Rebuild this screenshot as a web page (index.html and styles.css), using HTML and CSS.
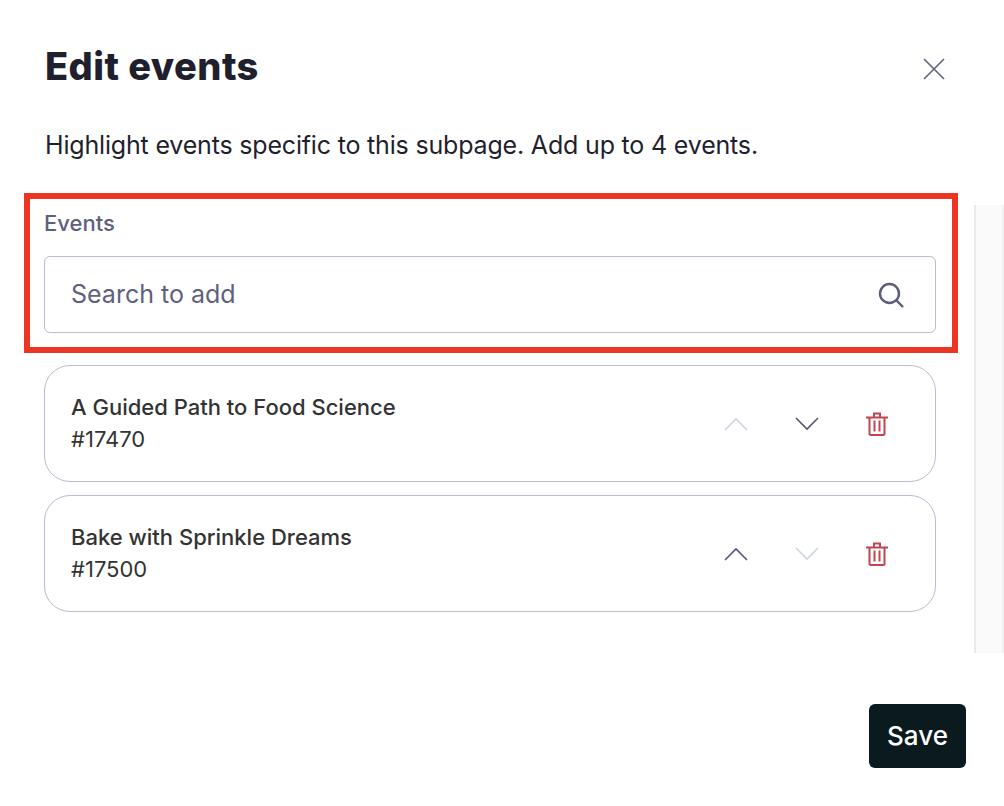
FILE: index.html
```html
<!DOCTYPE html>
<html lang="en">
<head>
<meta charset="utf-8">
<title>Edit events</title>
<link rel="stylesheet" href="styles.css">
</head>
<body>
<main class="dialog">
  <header class="head">
    <h1 class="title">Edit events</h1>
    <button class="close" aria-label="Close">
      <svg width="24" height="24" viewBox="0 0 24 24" class="ico"><path d="M2 2 22 22M22 2 2 22" stroke="#5f6080" stroke-width="1.6" fill="none"/></svg>
    </button>
  </header>
  <p class="desc">Highlight events specific to this subpage. Add up to 4 events.</p>
  <div class="body">
    <div class="content">
      <section class="field">
        <div class="label">Events</div>
        <div class="search">
          <span class="placeholder">Search to add</span>
          <svg width="28" height="28" viewBox="0 0 28 28" class="ico"><circle cx="11.5" cy="12.5" r="9.500" stroke="#5b5c7e" stroke-width="2.4" fill="none"/><path d="M18.500 19.500 25 26" stroke="#5b5c7e" stroke-width="2.4" fill="none"/></svg>
        </div>
      </section>
      <ul class="cards">
        <li class="card">
          <div class="info"><div class="name">A Guided Path to Food Science</div><div class="num">#17470</div></div>
          <div class="actions">
            <svg width="24" height="14" viewBox="0 0 24 14" class="ico"><path d="M1 13 12 2 23 13" stroke="#ced3e8" stroke-width="1.6" fill="none"/></svg>
            <svg width="24" height="14" viewBox="0 0 24 14" class="ico"><path d="M1 1 12 12 23 1" stroke="#55567a" stroke-width="1.6" fill="none"/></svg>
            <svg width="24" height="24" viewBox="0 0 24 24" class="ico trash"><path d="M1 5.500H23M9 5V1.500H15V5M4.500 6V21.500Q4.500 23 6 23H18Q19.500 23 19.500 21.500V6M9.500 8.500V19.500M14.500 8.500V19.500" stroke="#c1444f" stroke-width="2" fill="none"/></svg>
          </div>
        </li>
        <li class="card">
          <div class="info"><div class="name">Bake with Sprinkle Dreams</div><div class="num">#17500</div></div>
          <div class="actions">
            <svg width="24" height="14" viewBox="0 0 24 14" class="ico"><path d="M1 13 12 2 23 13" stroke="#55567a" stroke-width="1.6" fill="none"/></svg>
            <svg width="24" height="14" viewBox="0 0 24 14" class="ico"><path d="M1 1 12 12 23 1" stroke="#ced3e8" stroke-width="1.6" fill="none"/></svg>
            <svg width="24" height="24" viewBox="0 0 24 24" class="ico trash"><path d="M1 5.500H23M9 5V1.500H15V5M4.500 6V21.500Q4.500 23 6 23H18Q19.500 23 19.500 21.500V6M9.500 8.500V19.500M14.500 8.500V19.500" stroke="#c1444f" stroke-width="2" fill="none"/></svg>
          </div>
        </li>
      </ul>
    </div>
    <div class="scrollbar"></div>
  </div>
  <footer class="foot"><button class="save">Save</button></footer>
</main>
</body>
</html>
```
FILE: styles.css
```css
* { box-sizing: border-box; }
html, body { margin: 0; padding: 0; }
body { width: 1004px; height: 806px; overflow: hidden; background: #fff; font-family: Inter, "Liberation Sans", sans-serif; color: #1f1f2e; }
.dialog { display: flex; flex-direction: column; height: 806px; }
.head { display: flex; justify-content: space-between; align-items: center; height: 44px; margin-top: 44px; padding: 0 58px 0 45px; }
.title { margin: 0; font-size: 38px; line-height: 44px; font-weight: 800; letter-spacing: 0.45px; color: #1f1f2e; }
.close { display: flex; padding: 0; border: 0; background: none; margin-top: 6px; }
.ico { display: block; flex: none; }
.desc { margin: 39px 0 0; padding: 0 0 0 45px; height: 36px; font-size: 25px; line-height: 36px; letter-spacing: -0.18px; color: #1f1f2e; }
.body { display: flex; margin-top: 30px; padding-left: 24px; gap: 16px; align-items: flex-start; }
.content { width: 934px; display: flex; flex-direction: column; gap: 12px; }
.field { border: 6px solid #ee3524; padding: 8px 16px 14px 14px; height: 160px; }
.label { font-size: 22px; line-height: 32px; font-weight: 500; color: #5f6080; }
.search { display: flex; align-items: center; justify-content: space-between; height: 77px; margin-top: 17px; border: 1px solid #bcbbd1; border-radius: 6px; padding: 0 29px 2px 26px; }
.search .ico { margin-top: 2px; }
.placeholder { font-size: 25px; color: #5f6080; }
.cards { list-style: none; margin: 0 0 0 20px; padding: 0; display: flex; flex-direction: column; gap: 13px; width: 892px; }
.card { display: flex; align-items: center; justify-content: space-between; height: 117px; border: 1px solid #bcbbd1; border-radius: 26px; padding: 0 46px 2px 26px; }
.name { font-size: 22px; line-height: 32px; font-weight: 500; color: #333; }
.num { font-size: 22px; line-height: 32px; color: #333; }
.actions { display: flex; align-items: center; gap: 47px; padding-top: 2px; }
.trash { margin-left: -1px; }
.scrollbar { width: 30px; height: 448px; margin-top: 12px; background: #fafafa; border-left: 2px solid #e9e9e9; border-right: 2px solid #f0f0f0; }
.foot { display: flex; justify-content: flex-end; padding-right: 38px; margin-top: 51px; }
.save { width: 97px; height: 64px; border: 0; border-radius: 6px; padding: 0 0 2px; background: #0b1a1e; color: #fff; font-family: Inter, "Liberation Sans", sans-serif; font-size: 26px; font-weight: 500; }
```
